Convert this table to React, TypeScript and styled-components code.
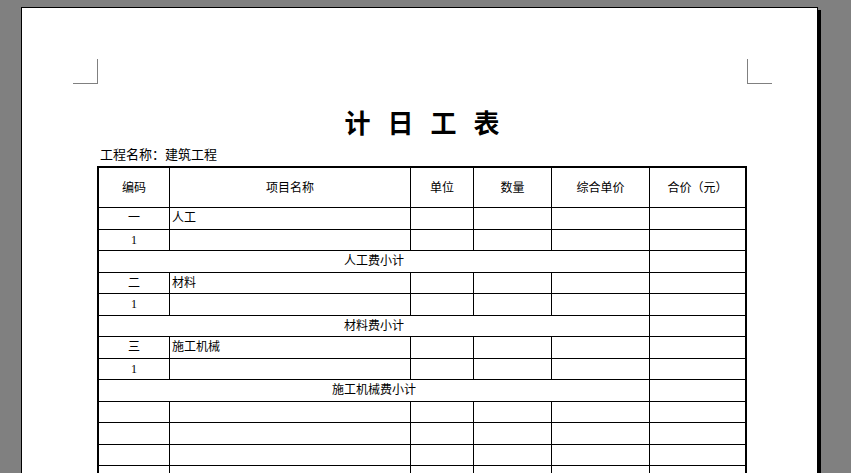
import React from "react";
import styled, { createGlobalStyle } from "styled-components";

const Global = createGlobalStyle`
  html, body {
    margin: 0;
    padding: 0;
    overflow: hidden;
    background: #808080;
  }
  body {
    font-family: "Noto Sans CJK SC", sans-serif;
    color: #000;
  }
`;

const Page = styled.div`
  position: relative;
  box-sizing: border-box;
  margin: 7px 0 0 21px;
  width: 797px;
  height: 640px;
  background: #fff;
  border: 1px solid #000;
  box-shadow: 3px 3px 0 #000;
  padding: 101px 0 0 75px;
`;

const CropMark = styled.div<{ $side: "left" | "right" }>`
  position: absolute;
  top: 51px;
  left: ${(p) => (p.$side === "left" ? "51px" : "725px")};
  width: 25px;
  height: 25px;
  box-sizing: border-box;
  border-bottom: 1px solid #808080;
  ${(p) =>
    p.$side === "left"
      ? "border-right: 1px solid #808080;"
      : "border-left: 1px solid #808080;"}
`;

const Content = styled.div`
  width: 650px;
  display: flex;
  flex-direction: column;
`;

const Title = styled.h1`
  margin: 0;
  display: flex;
  justify-content: center;
  gap: 17px;
  font-family: "Noto Sans CJK SC", sans-serif;
  font-size: 26px;
  line-height: 26px;
  font-weight: 700;
`;

const TitleChar = styled.span`
  display: block;
`;

const ProjectLabel = styled.div`
  margin-top: 12px;
  padding-left: 3px;
  font-size: 13px;
  line-height: 13px;
`;

const Sheet = styled.div`
  margin-top: 6px;
  box-sizing: border-box;
  width: 650px;
  border: 2px solid #000;
  display: grid;
  grid-template-columns: 71px 241px 63px 78px 98px 95px;
  grid-template-rows: 40px;
  grid-auto-rows: 21.5px;
`;

const Cell = styled.div<{ $align?: "left" | "center"; $span?: number; $last?: boolean }>`
  box-sizing: border-box;
  border-bottom: 1px solid #000;
  border-right: ${(p) => (p.$last ? "none" : "1px solid #000")};
  grid-column: span ${(p) => p.$span ?? 1};
  display: flex;
  align-items: center;
  justify-content: ${(p) => (p.$align === "left" ? "flex-start" : "center")};
  padding-left: ${(p) => (p.$align === "left" ? "2px" : "0")};
  font-family: "Liberation Serif", "Noto Sans CJK SC", serif;
  font-size: 12px;
  line-height: 12px;
  white-space: nowrap;
  overflow: hidden;
`;

const headers = ["编码", "项目名称", "单位", "数量", "综合单价", "合价（元）"];

type Row =
  | { kind: "item"; code: string; name: string }
  | { kind: "subtotal"; label: string };

const rows: Row[] = [
  { kind: "item", code: "一", name: "人工" },
  { kind: "item", code: "1", name: "" },
  { kind: "subtotal", label: "人工费小计" },
  { kind: "item", code: "二", name: "材料" },
  { kind: "item", code: "1", name: "" },
  { kind: "subtotal", label: "材料费小计" },
  { kind: "item", code: "三", name: "施工机械" },
  { kind: "item", code: "1", name: "" },
  { kind: "subtotal", label: "施工机械费小计" },
  { kind: "item", code: "", name: "" },
  { kind: "item", code: "", name: "" },
  { kind: "item", code: "", name: "" },
  { kind: "item", code: "", name: "" },
  { kind: "item", code: "", name: "" },
];

export default function App() {
  return (
    <>
      <Global />
      <Page>
        <CropMark $side="left" />
        <CropMark $side="right" />
        <Content>
          <Title>
            {["计", "日", "工", "表"].map((c, i) => (
              <TitleChar key={i}>{c}</TitleChar>
            ))}
          </Title>
          <ProjectLabel>工程名称：建筑工程</ProjectLabel>
          <Sheet>
            {headers.map((h, i) => (
              <Cell key={h} $last={i === headers.length - 1}>
                {h}
              </Cell>
            ))}
            {rows.map((r, i) =>
              r.kind === "subtotal" ? (
                <React.Fragment key={i}>
                  <Cell $span={5}>{r.label}</Cell>
                  <Cell $last />
                </React.Fragment>
              ) : (
                <React.Fragment key={i}>
                  <Cell>{r.code}</Cell>
                  <Cell $align="left">{r.name}</Cell>
                  <Cell />
                  <Cell />
                  <Cell />
                  <Cell $last />
                </React.Fragment>
              )
            )}
          </Sheet>
        </Content>
      </Page>
    </>
  );
}
